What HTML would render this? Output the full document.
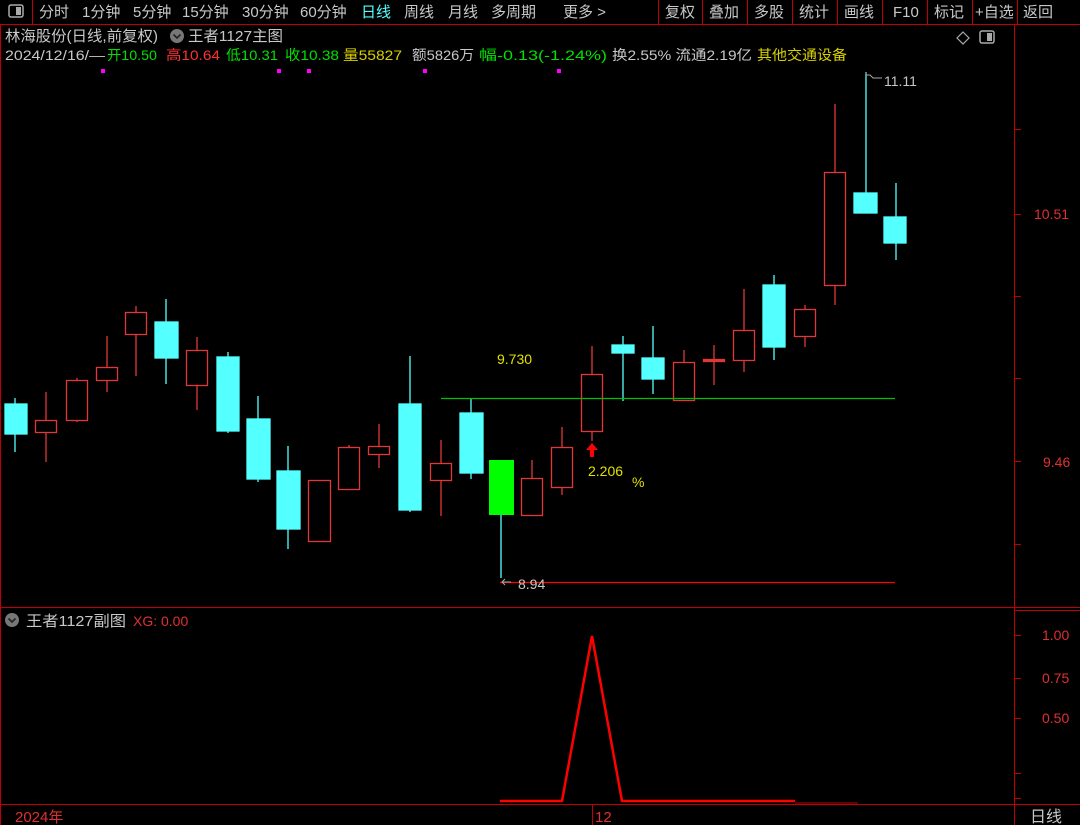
<!DOCTYPE html>
<html><head><meta charset="utf-8"><style>
html,body{margin:0;padding:0;background:#000;width:1080px;height:825px;overflow:hidden}
svg{display:block}
text{font-family:"Liberation Sans","Noto Sans CJK SC",sans-serif}
</style></head><body>
<svg width="1080" height="825" viewBox="0 0 1080 825" xmlns="http://www.w3.org/2000/svg">
<rect x="0" y="0" width="1080" height="24" fill="#000"/>
<line x1="0" y1="24.5" x2="1080" y2="24.5" stroke="#c00000"/>
<line x1="32.5" y1="0" x2="32.5" y2="24" stroke="#c00000"/>
<rect x="9" y="5" width="14" height="12" rx="2" fill="none" stroke="#aaa" stroke-width="1.5"/>
<rect x="16" y="7" width="5" height="8" fill="#aaa"/>
<g font-size="15" fill="#c8c8c8">
<text x="39" y="17">分时</text><text x="82" y="17">1分钟</text><text x="133" y="17">5分钟</text>
<text x="182" y="17">15分钟</text><text x="242" y="17">30分钟</text><text x="300" y="17">60分钟</text>
<text x="361" y="17" fill="#54ffff">日线</text><text x="404" y="17">周线</text><text x="448" y="17">月线</text>
<text x="491" y="17">多周期</text><text x="563" y="17">更多 &gt;</text>
<text x="665" y="17">复权</text><text x="709" y="17">叠加</text><text x="754" y="17">多股</text>
<text x="799" y="17">统计</text><text x="844" y="17">画线</text><text x="893" y="17">F10</text>
<text x="934" y="17">标记</text><text x="975" y="17">+自选</text><text x="1023" y="17">返回</text>
</g>
<g stroke="#c00000">
<line x1="658.5" y1="0" x2="658.5" y2="24"/><line x1="702.5" y1="0" x2="702.5" y2="24"/>
<line x1="747.5" y1="0" x2="747.5" y2="24"/><line x1="792.5" y1="0" x2="792.5" y2="24"/>
<line x1="837.5" y1="0" x2="837.5" y2="24"/><line x1="882.5" y1="0" x2="882.5" y2="24"/>
<line x1="927.5" y1="0" x2="927.5" y2="24"/><line x1="972.5" y1="0" x2="972.5" y2="24"/>
<line x1="1017.5" y1="0" x2="1017.5" y2="24"/>
</g>
<line x1="1014.5" y1="24" x2="1014.5" y2="825" stroke="#c00000"/>
<line x1="0.5" y1="24" x2="0.5" y2="825" stroke="#c00000"/>
<line x1="0" y1="607.5" x2="1080" y2="607.5" stroke="#c00000"/>
<line x1="1014" y1="610.5" x2="1080" y2="610.5" stroke="#c00000"/>
<line x1="0" y1="804.5" x2="1080" y2="804.5" stroke="#c00000"/>
<line x1="592.5" y1="804" x2="592.5" y2="825" stroke="#c00000"/>
<text x="5" y="41" font-size="15" fill="#c8c8c8" textLength="153" lengthAdjust="spacingAndGlyphs">林海股份(日线,前复权)</text>
<circle cx="177" cy="36" r="7" fill="#777"/>
<path d="M173.5 34.5l3.5 3.5 3.5-3.5" stroke="#222" stroke-width="1.6" fill="none"/>
<text x="188" y="41" font-size="15" fill="#c8c8c8" textLength="95" lengthAdjust="spacingAndGlyphs">王者1127主图</text>
<g font-size="14">
<text x="5" y="60" fill="#c8c8c8" textLength="100" lengthAdjust="spacingAndGlyphs">2024/12/16/—</text>
<text x="107" y="60" fill="#00e000" textLength="50" lengthAdjust="spacingAndGlyphs">开10.50</text>
<text x="166" y="60" fill="#ff3030" textLength="54" lengthAdjust="spacingAndGlyphs">高10.64</text>
<text x="226" y="60" fill="#00e000" textLength="52" lengthAdjust="spacingAndGlyphs">低10.31</text>
<text x="285" y="60" fill="#00e000" textLength="54" lengthAdjust="spacingAndGlyphs">收10.38</text>
<text x="343" y="60" fill="#d8d000" textLength="59" lengthAdjust="spacingAndGlyphs">量55827</text>
<text x="412" y="60" fill="#c8c8c8" textLength="62" lengthAdjust="spacingAndGlyphs">额5826万</text>
<text x="479" y="60" fill="#00e000" textLength="128" lengthAdjust="spacingAndGlyphs">幅-0.13(-1.24%)</text>
<text x="612" y="60" fill="#c8c8c8" textLength="140" lengthAdjust="spacingAndGlyphs">换2.55% 流通2.19亿</text>
<text x="757" y="60" fill="#d8d000" textLength="90" lengthAdjust="spacingAndGlyphs">其他交通设备</text>
</g>
<g fill="#ff00ff"><rect x="101" y="69" width="4" height="4"/><rect x="277" y="69" width="4" height="4"/><rect x="307" y="69" width="4" height="4"/><rect x="423" y="69" width="4" height="4"/><rect x="557" y="69" width="4" height="4"/></g>
<path d="M963 32l6 6-6 6-6-6z" fill="none" stroke="#aaa" stroke-width="1.2"/>
<rect x="980" y="31" width="14" height="12" rx="2" fill="none" stroke="#aaa" stroke-width="1.5"/>
<rect x="987" y="33" width="5" height="8" fill="#aaa"/>
<g stroke="#c00000"><line x1="1014" y1="129.5" x2="1021" y2="129.5"/><line x1="1014" y1="214.5" x2="1021" y2="214.5"/><line x1="1014" y1="296.5" x2="1021" y2="296.5"/><line x1="1014" y1="378.5" x2="1021" y2="378.5"/><line x1="1014" y1="461.5" x2="1021" y2="461.5"/><line x1="1014" y1="544.5" x2="1021" y2="544.5"/>
<line x1="1014" y1="635.5" x2="1021" y2="635.5"/><line x1="1014" y1="678.5" x2="1021" y2="678.5"/><line x1="1014" y1="718.5" x2="1021" y2="718.5"/><line x1="1014" y1="773.5" x2="1021" y2="773.5"/><line x1="1014" y1="798.5" x2="1021" y2="798.5"/></g>
<g font-size="14" fill="#e03030"><text x="1034" y="219">10.51</text><text x="1043" y="467">9.46</text>
<text x="1042" y="640">1.00</text><text x="1042" y="683">0.75</text><text x="1042" y="723">0.50</text></g>
<g stroke="#e03838" fill="none" stroke-width="1.3">
<line x1="46" y1="392" x2="46" y2="462"/><rect x="35.5" y="420.5" width="21" height="12" fill="#000"/>
<line x1="77" y1="378" x2="77" y2="422"/><rect x="66.5" y="380.5" width="21" height="40" fill="#000"/>
<line x1="107" y1="336" x2="107" y2="392"/><rect x="96.5" y="367.5" width="21" height="13" fill="#000"/>
<line x1="136" y1="306" x2="136" y2="376"/><rect x="125.5" y="312.5" width="21" height="22" fill="#000"/>
<line x1="197" y1="337" x2="197" y2="410"/><rect x="186.5" y="350.5" width="21" height="35" fill="#000"/>
<rect x="308.5" y="480.5" width="22" height="61" fill="#000"/>
<line x1="349" y1="445" x2="349" y2="490"/><rect x="338.5" y="447.5" width="21" height="42" fill="#000"/>
<line x1="379" y1="424" x2="379" y2="468"/><rect x="368.5" y="446.5" width="21" height="8" fill="#000"/>
<line x1="441" y1="440" x2="441" y2="516"/><rect x="430.5" y="463.5" width="21" height="17" fill="#000"/>
<line x1="532" y1="460" x2="532" y2="515"/><rect x="521.5" y="478.5" width="21" height="37" fill="#000"/>
<line x1="562" y1="427" x2="562" y2="495"/><rect x="551.5" y="447.5" width="21" height="40" fill="#000"/>
<line x1="592" y1="346" x2="592" y2="441"/><rect x="581.5" y="374.5" width="21" height="57" fill="#000"/>
<line x1="684" y1="350" x2="684" y2="401"/><rect x="673.5" y="362.5" width="21" height="38" fill="#000"/>
<line x1="714" y1="345" x2="714" y2="385"/><rect x="703.5" y="359.5" width="21" height="2" fill="#e03838"/>
<line x1="744" y1="289" x2="744" y2="372"/><rect x="733.5" y="330.5" width="21" height="30" fill="#000"/>
<line x1="805" y1="305" x2="805" y2="347"/><rect x="794.5" y="309.5" width="21" height="27" fill="#000"/>
<line x1="835" y1="104" x2="835" y2="305"/><rect x="824.5" y="172.5" width="21" height="113" fill="#000"/>
</g>
<g stroke="#54ffff" fill="#54ffff" stroke-width="1.3">
<line x1="15" y1="398" x2="15" y2="452"/><rect x="5" y="404" width="22" height="30"/>
<line x1="166" y1="299" x2="166" y2="384"/><rect x="155" y="322" width="23" height="36"/>
<line x1="228" y1="352" x2="228" y2="433"/><rect x="217" y="357" width="22" height="74"/>
<line x1="258" y1="396" x2="258" y2="482"/><rect x="247" y="419" width="23" height="60"/>
<line x1="288" y1="446" x2="288" y2="549"/><rect x="277" y="471" width="23" height="58"/>
<line x1="410" y1="356" x2="410" y2="512"/><rect x="399" y="404" width="22" height="106"/>
<line x1="471" y1="398" x2="471" y2="479"/><rect x="460" y="413" width="23" height="60"/>
<line x1="501" y1="515" x2="501" y2="578"/>
<line x1="623" y1="336" x2="623" y2="401"/><rect x="612" y="345" width="22" height="8"/>
<line x1="653" y1="326" x2="653" y2="394"/><rect x="642" y="358" width="22" height="21"/>
<line x1="774" y1="275" x2="774" y2="360"/><rect x="763" y="285" width="22" height="62"/>
<line x1="866" y1="72" x2="866" y2="213"/><rect x="854" y="193" width="23" height="20"/>
<line x1="896" y1="183" x2="896" y2="260"/><rect x="884" y="217" width="22" height="26"/>
</g>
<rect x="489" y="460" width="25" height="55" fill="#00ff00"/>
<line x1="441" y1="398.5" x2="895" y2="398.5" stroke="#00c000" stroke-width="1.3"/>
<line x1="500" y1="582.5" x2="895" y2="582.5" stroke="#ff0000" stroke-width="1.3"/>
<text x="497" y="364" font-size="14" fill="#e0e000">9.730</text>
<text x="588" y="476" font-size="14" fill="#e0e000">2.206</text>
<text x="632" y="487" font-size="14" fill="#e0e000">%</text>
<path d="M592 443l-6 7h4v7h4v-7h4z" fill="#ff0000"/>
<path d="M511 582h-9m3-3l-3 3 3 3" stroke="#aaa" fill="none"/>
<text x="518" y="589" font-size="14" fill="#c8c8c8">8.94</text>
<path d="M866 75h4l3 3h9m-16-3v-3" stroke="#aaa" fill="none"/>
<text x="884" y="86" font-size="14" fill="#c8c8c8">11.11</text>
<circle cx="12" cy="620" r="7" fill="#777"/>
<path d="M8.5 618.5l3.5 3.5 3.5-3.5" stroke="#222" stroke-width="1.6" fill="none"/>
<text x="26" y="626" font-size="15" fill="#c8c8c8" textLength="100" lengthAdjust="spacingAndGlyphs">王者1127副图</text>
<text x="133" y="626" font-size="14" fill="#e03030">XG: 0.00</text>
<path d="M500 801H562L592 636L622 801H795" stroke="#ff0000" stroke-width="2.5" fill="none"/>
<line x1="795" y1="803" x2="858" y2="803" stroke="#800000" stroke-width="1.5"/>
<text x="15" y="822" font-size="15" fill="#e03030">2024年</text>
<text x="595" y="822" font-size="15" fill="#e03030">12</text>
<text x="1030" y="822" font-size="16" fill="#c8c8c8">日线</text>
</svg>
</body></html>
